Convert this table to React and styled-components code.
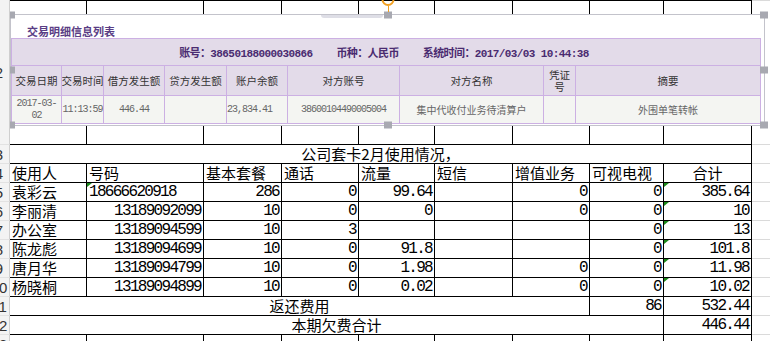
import React from 'react';
import styled, { createGlobalStyle, css } from 'styled-components';

const GlobalStyle = createGlobalStyle`
    html, body {
        margin: 0;
        padding: 0;
        background: #fff;
    }
    body {
        width: 770px;
        height: 341px;
        overflow: hidden;
        font-family: 'Noto Sans CJK SC', sans-serif;
    }
`;

const mono = css`
    font-family: 'Liberation Mono', 'Noto Sans CJK SC', monospace;
`;

const sheetRows = [
    ['袁彩云', { t: '18666620918', a: 'left', tri: true }, '286', '0', '99.64', '', '0', '0', { t: '385.64', tri: true }],
    ['李丽清', '13189092099', '10', '0', '0', '', '0', '0', { t: '10', tri: true }],
    ['办公室', '13189094599', '10', '3', '', '', '', '0', { t: '13', tri: true }],
    ['陈龙彪', '13189094699', '10', '0', '91.8', '', '', '0', { t: '101.8', tri: true }],
    ['唐月华', '13189094799', '10', '0', '1.98', '', '0', '0', { t: '11.98', tri: true }],
    ['杨晓桐', '13189094899', '10', '0', '0.02', '', '0', '0', { t: '10.02', tri: true }],
];

const headers = ['使用人', '号码', '基本套餐', '通话', '流量', '短信', '增值业务', '可视电视'];

const picHeads = ['交易日期', '交易时间', '借方发生额', '贷方发生额', '账户余额', '对方账号', '对方名称', '凭证|号', '摘要'];
const picData = [
    { t: '2017-03-|02', mono: true },
    { t: '11:13:59', mono: true },
    { t: '446.44', mono: true },
    { t: '' },
    { t: '23,834.41', mono: true, a: 'left' },
    { t: '38600104490005004', mono: true },
    { t: '集中代收付业务待清算户' },
    { t: '' },
    { t: '外围单笔转帐' },
];

const handles = [
    ['0', '0'], ['50%', '0'], ['100%', '0'],
    ['0', '50%'], ['100%', '50%'],
    ['0', '100%'], ['50%', '100%'], ['100%', '100%'],
];

const lines = (text) =>
    text.split('|').map((part, i) => (
        <React.Fragment key={i}>
            {i > 0 && <br />}
            {part}
        </React.Fragment>
    ));

const App = () => {
    const renderRow = (num, cells, opts = {}) => (
        <React.Fragment key={num}>
            <RowHead>
                <RowNum>{num}</RowNum>
            </RowHead>
            {cells}
            <Spare $top={opts.top} />
        </React.Fragment>
    );

    const blanks = (n, top) =>
        Array.from({ length: n }, (_, i) => <Cell key={i} $top={top} />);

    return (
        <Page>
            <GlobalStyle />
            <Sheet>
                {renderRow(2, blanks(9, true), { top: true })}
                {renderRow(
                    3,
                    <Cell $span={9} $align='center'>
                        公司套卡2月使用情况，
                    </Cell>
                )}
                {renderRow(4, [
                    ...headers.map((h) => <Cell key={h}>{h}</Cell>),
                    <Cell key='sum' $align='center'>
                        合计
                    </Cell>,
                ])}
                {sheetRows.map((row, r) =>
                    renderRow(
                        r + 5,
                        row.map((c, i) => {
                            const v = typeof c === 'string' ? { t: c } : c;
                            if (i === 0) return <Cell key={i}>{v.t}</Cell>;
                            return (
                                <Cell key={i} $num $align={v.a || 'right'} $tri={v.tri}>
                                    {v.t}
                                </Cell>
                            );
                        })
                    )
                )}
                {renderRow(11, [
                    <Cell key='a' $span={7} $align='center'>
                        返还费用
                    </Cell>,
                    <Cell key='h' $num $align='right'>
                        86
                    </Cell>,
                    <Cell key='i' $num $align='right'>
                        532.44
                    </Cell>,
                ])}
                {renderRow(12, [
                    <Cell key='a' $span={8} $align='center'>
                        本期欠费合计
                    </Cell>,
                    <Cell key='i' $num $align='right'>
                        446.44
                    </Cell>,
                ])}
                {renderRow(13, blanks(9))}
            </Sheet>

            <Picture>
                <TopShade />
                <PicTitle>交易明细信息列表</PicTitle>
                <PicTable>
                    <Band>
                        <span>账号：38650188000030866</span>
                        <span>币种：人民币</span>
                        <span>系统时间：2017/03/03 10:44:38</span>
                    </Band>
                    {picHeads.map((h) => (
                        <HeadCell key={h}>{lines(h)}</HeadCell>
                    ))}
                    {picData.map((d, i) => (
                        <DataCell key={i} $mono={d.mono} $align={d.a}>
                            {lines(d.t)}
                        </DataCell>
                    ))}
                </PicTable>
                {handles.map(([x, y]) => (
                    <Handle key={x + y} $x={x} $y={y} />
                ))}
                <RotateStem />
                <RotateKnob />
            </Picture>
        </Page>
    );
};

const Page = styled.div`
    position: relative;
    width: 770px;
    height: 341px;
    overflow: hidden;
`;

const Sheet = styled.div`
    display: grid;
    grid-template-columns: 10px 77px 117px 78px 77px 76px 78px 77px 74px 88px 1fr;
    grid-template-rows: 145px repeat(11, 19px);
`;

const RowHead = styled.div`
    position: relative;
    z-index: 3;
    box-sizing: border-box;
    display: flex;
    align-items: center;
    overflow: hidden;
    background: #f3f3f3;
    border-right: 1px solid #cfcfcf;
    border-bottom: 1px solid #e2e2e2;
    font: 15px 'Liberation Sans', sans-serif;
    color: #333;
`;

const RowNum = styled.span`
    flex: none;
    width: 30px;
    margin-left: -16px;
    text-align: center;
`;

const Cell = styled.div`
    grid-column: span ${({ $span }) => $span || 1};
    position: relative;
    box-sizing: border-box;
    display: flex;
    align-items: flex-end;
    justify-content: ${({ $align }) =>
        $align === 'right' ? 'flex-end' : $align === 'center' ? 'center' : 'flex-start'};
    padding: 0 2px 0 2px;
    border-right: 1px solid #000;
    border-bottom: 1px solid #000;
    border-top: ${({ $top }) => ($top ? '1px solid #000' : 'none')};
    font-size: 15px;
    line-height: 18px;
    color: #000;
    white-space: nowrap;
    overflow: hidden;
    ${({ $num }) =>
        $num &&
        css`
            ${mono};
            font-size: 16px;
            letter-spacing: -1.7px;
            padding-right: 2px;
        `}
    ${({ $tri }) =>
        $tri &&
        css`
            &::before {
                content: '';
                position: absolute;
                top: 0;
                left: 0;
                border-top: 4px solid #1b8a1b;
                border-right: 5px solid transparent;
            }
        `}
`;

const Spare = styled.div`
    box-sizing: border-box;
    border-bottom: 1px solid #dadada;
    border-top: ${({ $top }) => ($top ? '1px solid #dadada' : 'none')};
`;

const Picture = styled.div`
    position: absolute;
    left: 10px;
    top: 14px;
    z-index: 2;
    box-sizing: border-box;
    width: 755px;
    height: 112px;
    border: 1px solid #c3c3cb;
    background: #fff;
`;

const TopShade = styled.div`
    position: absolute;
    left: 310px;
    top: 0;
    width: 62px;
    height: 3px;
    border-radius: 0 0 8px 8px;
    background: #dedee6;
`;

const PicTitle = styled.div`
    box-sizing: border-box;
    height: 23px;
    padding: 9px 0 0 16px;
    font-size: 11px;
    line-height: 14px;
    font-weight: 700;
    color: #5a3d85;
`;

const PicTable = styled.div`
    display: grid;
    grid-template-columns: 50px 42px 61px 62px 61px 112px 144px 32px 185px;
    grid-template-rows: 27px 30px 28px;
    width: 750px;
    border-top: 1px solid #ccb0e3;
    border-left: 1px solid #ccb0e3;
    box-sizing: border-box;
`;

const picCell = css`
    box-sizing: border-box;
    display: flex;
    align-items: center;
    justify-content: center;
    text-align: center;
    border-right: 1px solid #ccb0e3;
    border-bottom: 1px solid #ccb0e3;
    overflow: hidden;
    white-space: nowrap;
`;

const Band = styled.div`
    ${picCell};
    grid-column: 1 / -1;
    gap: 24px;
    padding-right: 4px;
    background: #e3dbe9;
    ${mono};
    font-size: 11px;
    letter-spacing: -0.6px;
    font-weight: 700;
    color: #4a2b70;
`;

const HeadCell = styled.div`
    ${picCell};
    background: #e3dbe9;
    font-size: 10.5px;
    line-height: 12px;
    color: #333;
`;

const DataCell = styled.div`
    ${picCell};
    justify-content: ${({ $align }) => ($align === 'left' ? 'flex-start' : 'center')};
    background: #f4f5f2;
    font-size: 10px;
    line-height: 12px;
    color: #666;
    ${({ $mono }) =>
        $mono &&
        css`
            ${mono};
            letter-spacing: -1px;
        `}
`;

const Handle = styled.div`
    position: absolute;
    left: ${({ $x }) => $x};
    top: ${({ $y }) => $y};
    width: 8px;
    height: 7px;
    transform: translate(-50%, -50%);
    background: #a8a9b1;
`;

const RotateStem = styled.div`
    position: absolute;
    left: 50%;
    top: -9px;
    width: 1px;
    height: 6px;
    background: #f2a020;
`;

const RotateKnob = styled.div`
    position: absolute;
    left: 50%;
    top: -22px;
    width: 9px;
    height: 9px;
    transform: translateX(-50%);
    border: 2px solid #f2a020;
    border-radius: 50%;
`;

export default App;
